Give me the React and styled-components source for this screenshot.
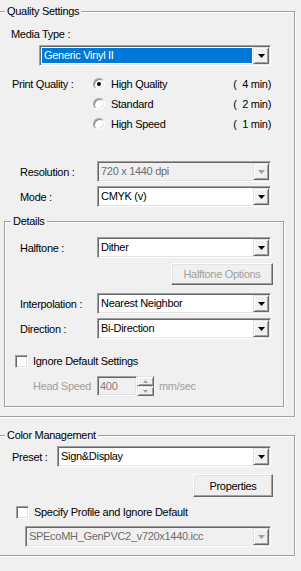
import React from 'react';
import styled, { createGlobalStyle } from 'styled-components';

const GlobalStyle = createGlobalStyle`
  html, body { margin: 0; padding: 0; background: #f0f0f0; overflow: hidden; }
  body {
    font-family: "Liberation Sans", Arial, sans-serif;
    font-size: 11px;
    letter-spacing: -0.3px;
    color: #000;
  }
  * { box-sizing: border-box; }
`;

const Panel = styled.div`
  width: 301px;
  height: 571px;
  background: #f0f0f0;
  display: flex;
  flex-direction: column;
`;

const Group = styled.section`
  position: relative;
  display: flex;
  flex-direction: column;
  flex-shrink: 0;
  width: ${p => p.$w}px;
  margin: ${p => p.$mt || 0}px 0 ${p => p.$mb || 0}px ${p => p.$ml || 0}px;
  padding-bottom: ${p => p.$pb || 0}px;
  border: 1px solid #a0a0a0;
  box-shadow: inset 1px 1px 0 #fff, 1px 1px 0 #fff;
`;

const GroupTitle = styled.span`
  position: absolute;
  top: -7px;
  left: 6px;
  padding: 0 2px;
  line-height: 13px;
  background: #f0f0f0;
  white-space: nowrap;
`;

const Label = styled.span`
  display: block;
  flex-shrink: 0;
  width: ${p => (p.$w ? `${p.$w}px` : 'auto')};
  margin: ${p => p.$mt || 0}px 0 0 ${p => p.$ml || 0}px;
  line-height: ${p => p.$lh || 14}px;
  color: ${p => (p.$disabled ? '#a0a0a0' : '#000')};
  white-space: nowrap;
`;

const Row = styled.div`
  display: flex;
  align-items: center;
  flex-shrink: 0;
  margin: ${p => p.$mt || 0}px 0 0 ${p => p.$ml || 0}px;
`;

const ComboFrame = styled.div`
  display: flex;
  flex-shrink: 0;
  width: ${p => p.$w}px;
  height: 21px;
  padding: 1px;
  border: 1px solid;
  border-color: #a0a0a0 #fff #fff #a0a0a0;
  box-shadow: inset 1px 1px 0 #696969, inset -1px -1px 0 #e3e3e3;
  background: ${p => (p.$disabled ? '#f0f0f0' : '#fff')};
`;

const ComboText = styled.div`
  flex: 1;
  margin: 1px;
  padding-left: ${p => (p.$focused ? 2 : 1)}px;
  height: 15px;
  line-height: 15px;
  overflow: hidden;
  white-space: nowrap;
  background: ${p => (p.$focused ? '#0078d7' : 'transparent')};
  color: ${p => (p.$focused ? '#fff' : p.$disabled ? '#6d6d6d' : '#000')};
`;

const RaisedBox = styled.div`
  display: flex;
  align-items: center;
  justify-content: center;
  border: 1px solid;
  border-color: #e3e3e3 #696969 #696969 #e3e3e3;
  box-shadow: inset 1px 1px 0 #fff, inset -1px -1px 0 #a0a0a0;
  background: #f0f0f0;
`;

const DropButton = styled(RaisedBox)`
  width: 16px;
  height: 17px;
  flex-shrink: 0;
`;

const PushButton = styled.div`
  display: flex;
  align-items: center;
  justify-content: center;
  flex-shrink: 0;
  width: ${p => p.$w}px;
  height: ${p => p.$h}px;
  margin: ${p => p.$mt || 0}px 0 0 ${p => p.$ml || 0}px;
  border: 1px solid;
  border-color: #fff #696969 #696969 #fff;
  box-shadow: inset -1px -1px 0 #a0a0a0, inset 1px 1px 0 #e3e3e3;
  background: #f0f0f0;
  color: ${p => (p.$disabled ? '#a0a0a0' : '#000')};
  white-space: nowrap;
`;

const QualityBlock = styled.div`
  display: flex;
  flex-shrink: 0;
  margin: 8px 0 0 13px;
`;

const RadioList = styled.div`
  display: flex;
  flex-direction: column;
  width: 178px;
`;

const RadioRow = styled.div`
  display: flex;
  align-items: center;
  height: 20px;
`;

const RadioCircle = styled.span`
  position: relative;
  flex-shrink: 0;
  width: 12px;
  height: 12px;
  margin-right: 6px;
  border-radius: 50%;
  border: 1px solid;
  border-color: #a0a0a0 #fff #fff #a0a0a0;
  box-shadow: inset 1px 1px 0 #8a8a8a, inset -1px -1px 0 #e3e3e3;
  background: #fff;
  &::after {
    content: '';
    display: ${p => (p.$checked ? 'block' : 'none')};
    position: absolute;
    left: 3px;
    top: 3px;
    width: 4px;
    height: 4px;
    border-radius: 50%;
    background: #000;
  }
`;

const Time = styled.span`
  margin-left: auto;
  white-space: pre;
`;

const CheckBox = styled.span`
  flex-shrink: 0;
  width: 13px;
  height: 13px;
  margin-right: 5px;
  border: 1px solid;
  border-color: #a0a0a0 #fff #fff #a0a0a0;
  box-shadow: inset 1px 1px 0 #696969, inset -1px -1px 0 #e3e3e3;
  background: #fff;
`;

const SpinEdit = styled.div`
  display: flex;
  align-items: center;
  flex-shrink: 0;
  width: 40px;
  height: 20px;
  padding-left: 2px;
  border: 1px solid;
  border-color: #a0a0a0 #fff #fff #a0a0a0;
  box-shadow: inset 1px 1px 0 #696969, inset -1px -1px 0 #e3e3e3;
  background: #f0f0f0;
  color: #808080;
`;

const SpinButtons = styled.div`
  display: flex;
  flex-direction: column;
  flex-shrink: 0;
  width: 17px;
  height: 20px;
`;

const SpinButton = styled(RaisedBox)`
  flex: 1;
`;

const Unit = styled.span`
  margin-left: 5px;
  color: #a0a0a0;
  white-space: nowrap;
`;

function Arrow({ color = '#000', up = false, w = 7, h = 4 }) {
  const pts = up ? `0,${h} ${w},${h} ${w / 2},0` : `0,0 ${w},0 ${w / 2},${h}`;
  return (
    <svg width={w} height={h} viewBox={`0 0 ${w} ${h}`} style={{ display: 'block' }}>
      <polygon points={pts} fill={color} />
    </svg>
  );
}

function Combo({ value, width, focused, disabled }) {
  return (
    <ComboFrame $w={width} $disabled={disabled}>
      <ComboText $focused={focused} $disabled={disabled}>{value}</ComboText>
      <DropButton>
        <Arrow color={disabled ? '#a0a0a0' : '#000'} />
      </DropButton>
    </ComboFrame>
  );
}

function Radio({ checked, label, time }) {
  return (
    <RadioRow>
      <RadioCircle $checked={checked} />
      <span>{label}</span>
      <Time>{time}</Time>
    </RadioRow>
  );
}

export default function App() {
  return (
    <>
      <GlobalStyle />
      <Panel>
        <Group $w={297} $mt={11} $ml={-2}>
          <GroupTitle>Quality Settings</GroupTitle>
          <Label $mt={15} $ml={12}>Media Type :</Label>
          <Row $mt={4} $ml={40}>
            <Combo value="Generic Vinyl II" width={232} focused />
          </Row>
          <QualityBlock>
            <Label $w={81} $lh={20}>Print Quality :</Label>
            <RadioList>
              <Radio checked label="High Quality" time="(  4 min)" />
              <Radio label="Standard" time="(  2 min)" />
              <Radio label="High Speed" time="(  1 min)" />
            </RadioList>
          </QualityBlock>
          <Row $mt={27} $ml={21}>
            <Label $w={77}>Resolution :</Label>
            <Combo value="720 x 1440 dpi" width={174} disabled />
          </Row>
          <Row $mt={4} $ml={21}>
            <Label $w={77}>Mode :</Label>
            <Combo value="CMYK (v)" width={174} />
          </Row>

          <Group $w={280} $mt={14} $ml={5} $mb={9} $pb={10}>
            <GroupTitle>Details</GroupTitle>
            <Row $mt={15} $ml={15}>
              <Label $w={77}>Halftone :</Label>
              <Combo value="Dither" width={174} />
            </Row>
            <PushButton $w={102} $h={22} $mt={5} $ml={166} $disabled>
              Halftone Options
            </PushButton>
            <Row $mt={8} $ml={15}>
              <Label $w={77}>Interpolation :</Label>
              <Combo value="Nearest Neighbor" width={174} />
            </Row>
            <Row $mt={4} $ml={15}>
              <Label $w={77}>Direction :</Label>
              <Combo value="Bi-Direction" width={174} />
            </Row>
            <Row $mt={16} $ml={10}>
              <CheckBox />
              <Label $lh={13}>Ignore Default Settings</Label>
            </Row>
            <Row $mt={8} $ml={28}>
              <Label $w={64} $disabled>Head Speed</Label>
              <SpinEdit>400</SpinEdit>
              <SpinButtons>
                <SpinButton>
                  <Arrow up color="#a0a0a0" w={5} h={3} />
                </SpinButton>
                <SpinButton>
                  <Arrow color="#a0a0a0" w={5} h={3} />
                </SpinButton>
              </SpinButtons>
              <Unit>mm/sec</Unit>
            </Row>
          </Group>
        </Group>

        <Group $w={297} $mt={18} $ml={-2} $pb={8}>
          <GroupTitle>Color Management</GroupTitle>
          <Row $mt={10} $ml={13}>
            <Label $w={45}>Preset :</Label>
            <Combo value="Sign&Display" width={214} />
          </Row>
          <PushButton $w={80} $h={23} $mt={7} $ml={194}>
            Properties
          </PushButton>
          <Row $mt={9} $ml={17}>
            <CheckBox />
            <Label $lh={13}>Specify Profile and Ignore Default</Label>
          </Row>
          <Row $mt={7} $ml={26}>
            <Combo value="SPEcoMH_GenPVC2_v720x1440.icc" width={246} disabled />
          </Row>
        </Group>
      </Panel>
    </>
  );
}
